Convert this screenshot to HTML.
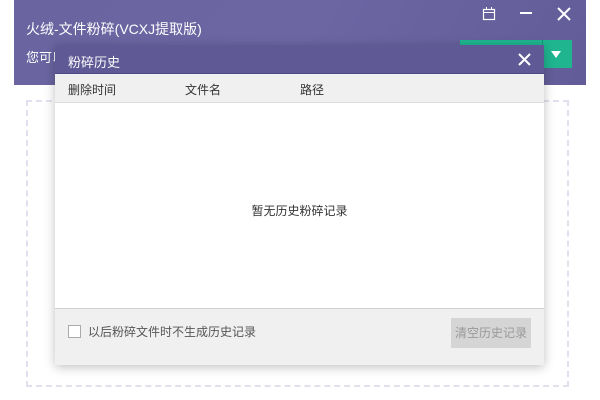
<!DOCTYPE html>
<html><head><meta charset="utf-8"><style>
*{margin:0;padding:0;box-sizing:border-box}
body{width:600px;height:400px;background:#fff;position:relative;overflow:hidden;font-family:"Liberation Sans","Noto Sans CJK SC",sans-serif;}
.hdr{position:absolute;left:14px;top:0;width:572px;height:85px;background:linear-gradient(120deg,#6a64a0,#6c66a3 50%,#625c98);}
.t{position:absolute;color:#fff;font-size:14px}
.dash{position:absolute;left:26px;top:100px;width:543px;height:287px;border:2px dashed #e2e0ee}
.dlg{position:absolute;left:55px;top:45px;width:489px;height:320px;background:#fff;box-shadow:0 2px 10px rgba(0,0,0,.25)}
.dt{height:29px;background:#5f5995;color:#fff;font-size:13px;padding:7px 0 0 13px;border-bottom:1px solid #4e4884}
.ch{height:29px;background:#f0f0f0;font-size:12px;color:#333;position:relative;border-bottom:1px solid #ddd}
.ch span{position:absolute;top:7px}
.ft{position:absolute;left:0;top:263px;width:489px;height:57px;background:#f0f0f0;border-top:1px solid #d0d0d0}
</style></head><body>
<div class="hdr"></div>
<div class="t" style="left:26px;top:19px">火绒-文件粉碎(VCXJ提取版)</div>
<div class="t" style="left:26px;top:47px;font-size:13px">您可以</div>
<svg style="position:absolute;left:482px;top:7px" width="14" height="14"><rect x="1.5" y="2.5" width="11" height="10" fill="none" stroke="#fff" stroke-width="1.2"/><line x1="1.5" y1="5.5" x2="12.5" y2="5.5" stroke="#fff"/><line x1="4.5" y1="0" x2="4.5" y2="3" stroke="#fff"/><line x1="9.5" y1="0" x2="9.5" y2="3" stroke="#fff"/></svg>
<div style="position:absolute;left:520px;top:12px;width:12px;height:2px;background:#fff"></div>
<svg style="position:absolute;left:557px;top:7px" width="14" height="14"><path d="M1 1L13 13M13 1L1 13" stroke="#fff" stroke-width="2"/></svg>
<div style="position:absolute;left:460px;top:40px;width:112px;height:28px;background:#1fb58f"></div>
<div style="position:absolute;left:542px;top:40px;width:1px;height:28px;background:#149676"></div>
<div style="position:absolute;left:551px;top:51px;border-left:5px solid transparent;border-right:5px solid transparent;border-top:7px solid #fff"></div>
<div class="dash"></div>
<div style="position:absolute;left:190px;top:350px;font-size:12px;color:#666">或直接拖拽文件至本窗口完成添加</div>
<div class="dlg">
<div class="dt">粉碎历史</div>
<svg style="position:absolute;left:463px;top:8px" width="13" height="13"><path d="M1 1L12 12M12 1L1 12" stroke="#fff" stroke-width="2"/></svg>
<div class="ch"><span style="left:13px">删除时间</span><span style="left:130px">文件名</span><span style="left:245px">路径</span></div>
<div style="position:absolute;left:0;width:489px;top:157px;text-align:center;font-size:12px;color:#333">暂无历史粉碎记录</div>
<div class="ft">
<div style="position:absolute;left:13px;top:16px;width:13px;height:13px;border:1px solid #aaa;background:#fff"></div>
<div style="position:absolute;left:33px;top:14px;font-size:12px;color:#555">以后粉碎文件时不生成历史记录</div>
<div style="position:absolute;left:396px;top:9px;width:80px;height:30px;background:#d5d5d5;color:#999;font-size:12px;text-align:center;line-height:30px">清空历史记录</div>
</div>
</div>
</body></html>
